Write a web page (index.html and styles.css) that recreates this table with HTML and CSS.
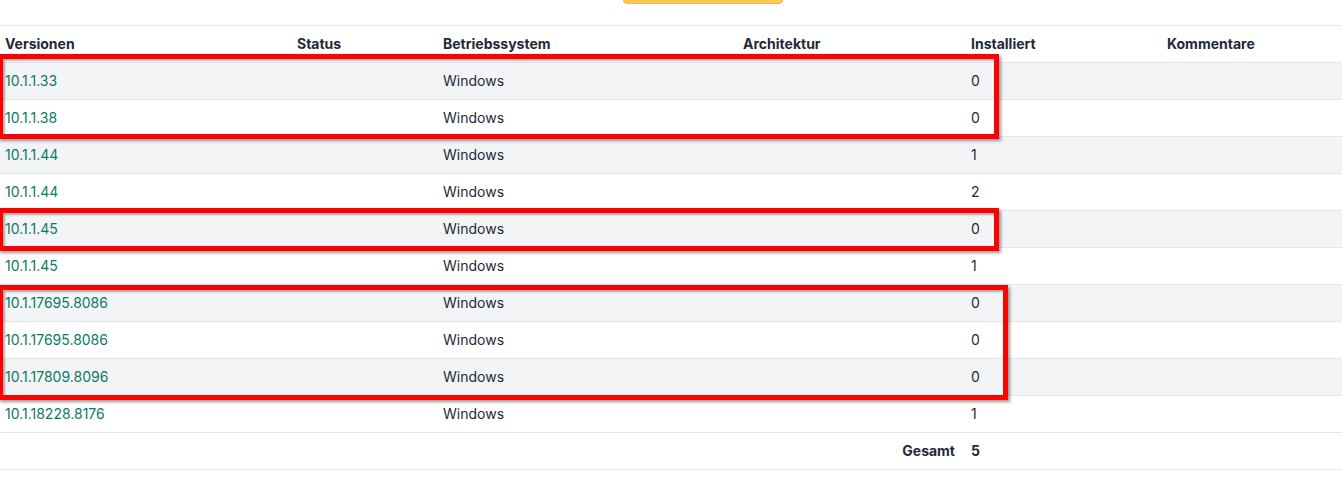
FILE: index.html
```html
<!DOCTYPE html>
<html>
  <head>
    <title>Versionen</title>
    <link rel="stylesheet" href="styles.css">
  </head>
  <body>
    <div class="sheet">
      <div class="toolbar">
        <button class="export-button" aria-label="Exportieren"></button>
      </div>

      <table class="versions">
        <colgroup>
          <col class="col-version">
          <col class="col-status">
          <col class="col-os">
          <col class="col-arch">
          <col class="col-installed">
          <col class="col-comment">
        </colgroup>
        <thead>
          <tr>
            <th>Versionen</th>
            <th>Status</th>
            <th>Betriebssystem</th>
            <th>Architektur</th>
            <th>Installiert</th>
            <th>Kommentare</th>
          </tr>
        </thead>
        <tbody>
          <tr><td><a href="#">10.1.1.33</a></td><td></td><td>Windows</td><td></td><td>0</td><td></td></tr>
          <tr><td><a href="#">10.1.1.38</a></td><td></td><td>Windows</td><td></td><td>0</td><td></td></tr>
          <tr><td><a href="#">10.1.1.44</a></td><td></td><td>Windows</td><td></td><td>1</td><td></td></tr>
          <tr><td><a href="#">10.1.1.44</a></td><td></td><td>Windows</td><td></td><td>2</td><td></td></tr>
          <tr><td><a href="#">10.1.1.45</a></td><td></td><td>Windows</td><td></td><td>0</td><td></td></tr>
          <tr><td><a href="#">10.1.1.45</a></td><td></td><td>Windows</td><td></td><td>1</td><td></td></tr>
          <tr><td><a href="#">10.1.17695.8086</a></td><td></td><td>Windows</td><td></td><td>0</td><td></td></tr>
          <tr><td><a href="#">10.1.17695.8086</a></td><td></td><td>Windows</td><td></td><td>0</td><td></td></tr>
          <tr><td><a href="#">10.1.17809.8096</a></td><td></td><td>Windows</td><td></td><td>0</td><td></td></tr>
          <tr><td><a href="#">10.1.18228.8176</a></td><td></td><td>Windows</td><td></td><td>1</td><td></td></tr>
        </tbody>
        <tfoot>
          <tr>
            <td colspan="4" class="total-label">Gesamt</td>
            <td class="total-value">5</td>
            <td></td>
          </tr>
        </tfoot>
      </table>

      <!-- annotation boxes drawn over the table -->
      <div class="mark mark-1"></div>
      <div class="mark mark-2"></div>
      <div class="mark mark-3"></div>
    </div>
  </body>
</html>
```

FILE: styles.css
```css
body {
  margin: 0;
  font-family: Inter, "Noto Sans", sans-serif;
  font-size: 14px;
  color: #1f2937;
  background: #fff;
}

.sheet {
  position: relative;
  overflow: hidden;
}

.toolbar {
  height: 25px;
  display: flex;
  align-items: flex-end;
  justify-content: flex-start;
  overflow: hidden;
}

.export-button {
  margin: 0 0 21px 623px;
  width: 160px;
  height: 34px;
  border: 1px solid #f0b93f;
  border-radius: 4px;
  background-color: #fcc85c;
}

table {
  border-collapse: collapse;
  width: 100%;
  table-layout: fixed;
  border-top: 1px solid #e5e7eb;
}

.col-version { width: 292px; }
.col-status { width: 146px; }
.col-os { width: 300px; }
.col-arch { width: 228px; }
.col-installed { width: 196px; }

th,
td {
  padding: 8px 5px;
  line-height: 20px;
  text-align: left;
  border-bottom: 1px solid #e5e7eb;
  white-space: nowrap;
}

th {
  font-weight: 700;
  color: #1f2937;
}

td {
  color: #1f2937;
}

tbody tr:nth-child(odd) {
  background-color: #f3f4f6;
}

td a {
  color: #0b7a66;
  text-decoration: none;
}

.total-label {
  text-align: right;
  font-weight: 700;
  padding-right: 11px;
}

.total-value {
  font-weight: 700;
}

.mark {
  position: absolute;
  left: -2px;
  border: 5px solid #ff0000;
  box-shadow: 2px 2px 3px rgba(0, 0, 0, 0.4), inset 2px 2px 2px rgba(0, 0, 0, 0.3);
}

.mark-1 {
  top: 54px;
  width: 991px;
  height: 75px;
}

.mark-2 {
  top: 208px;
  width: 991px;
  height: 33px;
}

.mark-3 {
  top: 285px;
  width: 1000px;
  height: 105px;
}
```
